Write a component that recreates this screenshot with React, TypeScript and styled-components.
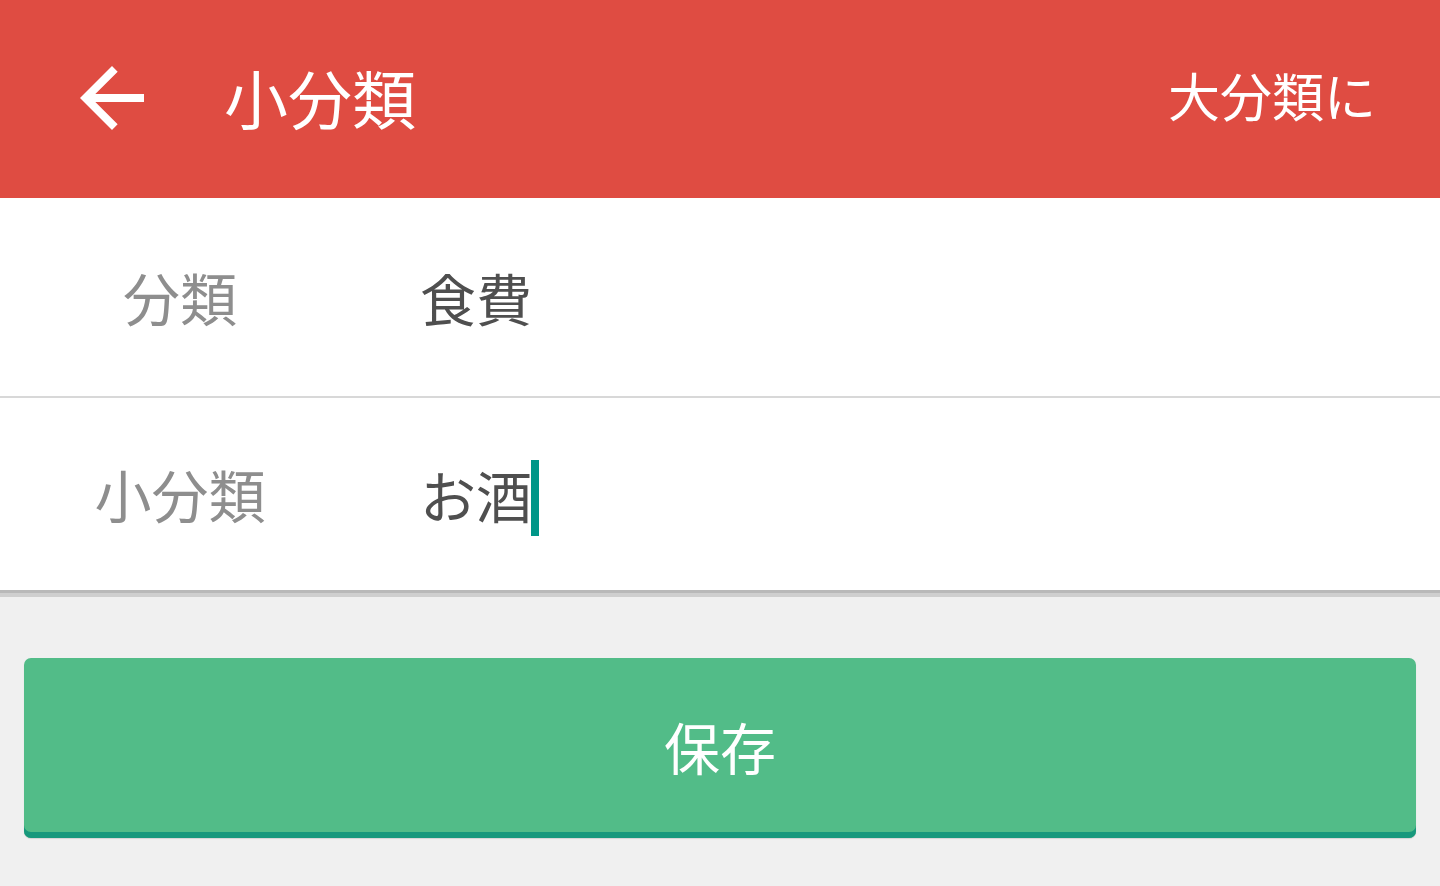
import React from "react";
import styled, { createGlobalStyle } from "styled-components";

const Global = createGlobalStyle`
  html, body { margin: 0; padding: 0; }
  body {
    background: #f0f0f0;
    font-family: "Noto Sans CJK JP", "Noto Sans", sans-serif;
    width: 1440px;
    height: 886px;
    overflow: hidden;
  }
`;

const Page = styled.div`
  display: flex;
  flex-direction: column;
  width: 1440px;
  height: 886px;
  background: #f0f0f0;
`;

const Header = styled.header`
  display: flex;
  align-items: center;
  height: 198px;
  background: #df4c42;
  color: #ffffff;
  padding: 0 66px 0 64px;
  box-sizing: border-box;
`;

const BackButton = styled.button`
  display: flex;
  align-items: center;
  justify-content: center;
  width: 96px;
  height: 96px;
  padding: 0;
  border: none;
  background: transparent;
  color: #ffffff;
  margin-top: -2px;
`;

const Title = styled.h1`
  margin: 0 0 6px 64px;
  font-size: 64px;
  font-weight: 400;
  line-height: 1;
  flex: 1;
  letter-spacing: 0;
`;

const Action = styled.span`
  font-size: 52px;
  line-height: 1;
  font-weight: 400;
  margin: 0 -2px 8px 0;
`;

const Form = styled.div`
  display: flex;
  flex-direction: column;
  background: #ffffff;
  box-shadow: 0 3px 0 #b9b9b9, 0 7px 0 #cfcfcf;
`;

const Row = styled.div<{ $h: number; $divider?: boolean }>`
  display: flex;
  align-items: center;
  height: ${(p) => p.$h}px;
  box-sizing: border-box;
  border-bottom: ${(p) => (p.$divider ? "2px solid #d8d8d8" : "none")};
`;

const Label = styled.div`
  width: 360px;
  text-align: center;
  font-size: 57px;
  color: #8e8e8e;
  line-height: 1;
  margin-bottom: 2px;
`;

const Value = styled.div`
  display: flex;
  align-items: center;
  margin-left: 60px;
  font-size: 56px;
  color: #4f4f4f;
  line-height: 1;
`;

const Caret = styled.span`
  display: inline-block;
  width: 8px;
  height: 76px;
  background: #009688;
  margin: 8px 0 0 -1px;
`;

const Footer = styled.div`
  padding: 68px 24px 0;
`;

const SaveButton = styled.button`
  display: flex;
  align-items: center;
  justify-content: center;
  width: 100%;
  height: 180px;
  border: none;
  border-radius: 7px;
  background: #52bc88;
  box-shadow: inset 0 -6px 0 #17987c, 0 1px 1px rgba(0, 0, 0, 0.12);
  color: #ffffff;
  font-family: "Noto Sans CJK JP", "Noto Sans", sans-serif;
  font-size: 56px;
  padding: 0 0 4px;
  line-height: 1;
`;

const ArrowBack = () => (
  <svg width="96" height="96" viewBox="0 0 24 24" fill="currentColor">
    <path d="M20 11H7.83l5.59-5.59L12 4l-8 8 8 8 1.41-1.41L7.83 13H20v-2z" />
  </svg>
);

export default function App() {
  return (
    <>
      <Global />
      <Page>
        <Header>
          <BackButton aria-label="戻る">
            <ArrowBack />
          </BackButton>
          <Title>小分類</Title>
          <Action>大分類に</Action>
        </Header>
        <Form>
          <Row $h={200} $divider>
            <Label>分類</Label>
            <Value>食費</Value>
          </Row>
          <Row $h={192}>
            <Label>小分類</Label>
            <Value>
              お酒
              <Caret />
            </Value>
          </Row>
        </Form>
        <Footer>
          <SaveButton>保存</SaveButton>
        </Footer>
      </Page>
    </>
  );
}
